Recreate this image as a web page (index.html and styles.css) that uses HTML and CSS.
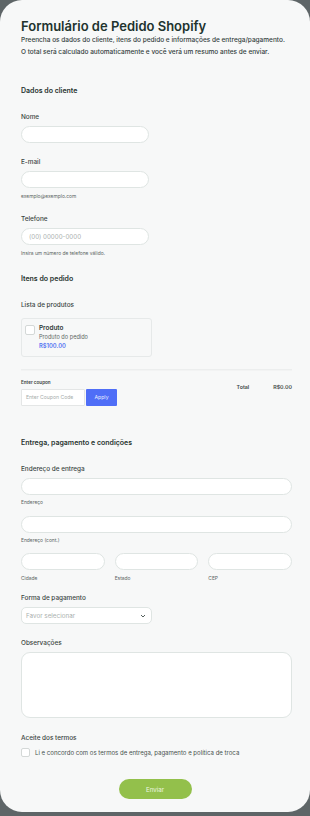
FILE: index.html
```html
<!DOCTYPE html>
<html lang="pt-BR">
<head>
    <meta charset="UTF-8">
    <meta name="viewport" content="width=device-width, initial-scale=1.0">
    <title>Formulário de Pedido Shopify</title>
    <link rel="stylesheet" href="styles.css">
</head>
<body>
    <div class="card">
        <h1 class="title">Formulário de Pedido Shopify</h1>
        <p class="subtitle">Preencha os dados do cliente, itens do pedido e informações de entrega/pagamento.<br>O total será calculado automaticamente e você verá um resumo antes de enviar.</p>

        <h2 class="section first">Dados do cliente</h2>

        <label class="label first">Nome</label>
        <div class="input short"></div>

        <label class="label wide">E-mail</label>
        <div class="input short"></div>
        <div class="help loose">exemplo@exemplo.com</div>

        <label class="label wide">Telefone</label>
        <div class="input short"><span class="placeholder">(00) 00000-0000</span></div>
        <div class="help loose">Insira um número de telefone válido.</div>

        <h2 class="section items">Itens do pedido</h2>
        <label class="label first">Lista de produtos</label>

        <div class="product">
            <span class="box"></span>
            <div class="product-info">
                <div class="product-name">Produto</div>
                <div class="product-desc">Produto do pedido</div>
                <div class="product-price">R$100.00</div>
            </div>
        </div>

        <div class="divider"></div>

        <div class="summary">
            <div class="coupon">
                <div class="coupon-label">Enter coupon</div>
                <div class="coupon-row">
                    <div class="coupon-input">Enter Coupon Code</div>
                    <div class="coupon-btn">Apply</div>
                </div>
            </div>
            <div class="total">
                <span>Total</span>
                <span class="total-value">R$0.00</span>
            </div>
        </div>

        <h2 class="section delivery">Entrega, pagamento e condições</h2>

        <label class="label first">Endereço de entrega</label>
        <div class="input"></div>
        <div class="help">Endereço</div>
        <div class="input gap"></div>
        <div class="help">Endereço (cont.)</div>

        <div class="triple">
            <div>
                <div class="input"></div>
                <div class="help">Cidade</div>
            </div>
            <div>
                <div class="input"></div>
                <div class="help">Estado</div>
            </div>
            <div>
                <div class="input"></div>
                <div class="help">CEP</div>
            </div>
        </div>

        <label class="label pay">Forma de pagamento</label>
        <div class="select">
            <span class="placeholder">Favor selecionar</span>
            <svg width="6" height="4" viewBox="0 0 6 4"><path d="M1 1l2 2 2-2" fill="none" stroke="#55605d" stroke-width="1"/></svg>
        </div>

        <label class="label notes">Observações</label>
        <div class="textarea"></div>

        <label class="label terms-title">Aceite dos termos</label>
        <div class="terms">
            <span class="box"></span>
            <span>Li e concordo com os termos de entrega, pagamento e política de troca</span>
        </div>

        <div class="actions">
            <button class="submit">Enviar</button>
        </div>
    </div>
</body>
</html>
```

FILE: styles.css
```css
body {
    margin: 0;
    background: #5e6567;
    font-family: Inter, "Noto Sans", sans-serif;
    color: #36423f;
}
.card {
    background: #f7f8f8;
    border-radius: 22px;
    height: 812px;
    padding: 18px 18px 0 21px;
    box-sizing: border-box;
}
.title {
    margin: 0;
    font-size: 13px;
    line-height: 16px;
    font-weight: 600;
    color: #21332e;
}
.subtitle {
    margin: 0;
    font-size: 6.5px;
    line-height: 12px;
    color: #34403d;
    font-weight: 500;
    white-space: nowrap;
}
.section {
    margin: 28px 0 0;
    font-size: 7px;
    line-height: 10px;
    font-weight: 600;
    color: #27332f;
}
.section.items {
    margin-top: 17px;
}
.section.delivery {
    margin-top: 32px;
}
.label {
    display: block;
    margin: 13px 0 4px;
    font-size: 6.4px;
    line-height: 10px;
    font-weight: 500;
    color: #3a4542;
}
.label.first {
    margin-top: 16px;
}
.label.wide {
    margin-top: 14px;
}
.label.pay {
    margin-top: 11px;
}
.label.notes {
    margin-top: 14px;
}
.label.terms-title {
    margin-top: 15px;
}
.input {
    height: 15px;
    background: #fff;
    border: 1px solid #dfe5e3;
    border-radius: 9px;
    display: flex;
    align-items: center;
    padding: 0 7px;
}
.input.short {
    width: 112px;
}
.input.gap {
    margin-top: 10px;
}
.placeholder {
    font-size: 6.2px;
    color: #aab0ae;
}
.help {
    margin-top: 3px;
    font-size: 4.9px;
    line-height: 8px;
    color: #5a6462;
}
.help.loose {
    margin-top: 4px;
}
.product {
    margin-top: 8px;
    width: 122px;
    border: 1px solid #e6e9e9;
    border-radius: 3px;
    display: flex;
    gap: 4px;
    padding: 5px 4px 6px 3px;
    height: 26px;
}
.box {
    width: 8px;
    height: 8px;
    flex: none;
    background: #fff;
    border: 1px solid #d4d8d7;
    border-radius: 2px;
}
.product .box {
    margin-top: 1px;
}
.product-name {
    font-size: 6.4px;
    line-height: 9px;
    font-weight: 600;
    color: #2f3a37;
}
.product-desc {
    font-size: 5.6px;
    line-height: 8px;
    color: #5c6663;
}
.product-price {
    font-size: 5.8px;
    line-height: 10px;
    font-weight: 600;
    color: #5272f2;
}
.divider {
    margin-top: 12px;
    height: 1px;
    background: #eceeee;
    border-bottom: 1px solid #f2f3f3;
}
.summary {
    display: flex;
    justify-content: space-between;
    margin-top: 8px;
}
.coupon-label {
    font-size: 4.6px;
    line-height: 8px;
    font-weight: 600;
    color: #3a4441;
}
.coupon-row {
    display: flex;
    gap: 1px;
    margin-top: 2px;
}
.coupon-input {
    width: 58px;
    height: 15px;
    background: #fff;
    border: 1px solid #e4e6e6;
    border-radius: 1px;
    font-size: 5.1px;
    line-height: 15px;
    color: #a7adab;
    padding-left: 4px;
}
.coupon-btn {
    width: 31px;
    height: 17px;
    background: #4f6ef7;
    border-radius: 1px;
    font-size: 5.2px;
    line-height: 17px;
    color: #e8ecff;
    text-align: center;
}
.total {
    display: flex;
    gap: 24px;
    margin-top: 4px;
    font-size: 5.3px;
    line-height: 8px;
    font-weight: 600;
    color: #3d4744;
}
.total-value {
    color: #434b49;
}
.triple {
    display: grid;
    grid-template-columns: 1fr 1fr 1fr;
    gap: 10px;
    margin-top: 9px;
}
.triple .help {
    margin-top: 4px;
}
.select {
    width: 120px;
    height: 15px;
    background: #fff;
    border: 1px solid #dfe5e3;
    border-radius: 5px;
    display: flex;
    align-items: center;
    justify-content: space-between;
    padding: 0 5px 0 4px;
}
.select .placeholder {
    font-size: 6.3px;
}
.textarea {
    height: 64px;
    background: #fff;
    border: 1px solid #dfe5e3;
    border-radius: 9px;
}
.terms {
    display: flex;
    align-items: center;
    gap: 5px;
    margin-top: 5px;
    font-size: 6.05px;
    color: #48524f;
}
.terms .box {
    width: 7px;
    height: 7px;
}
.actions {
    display: flex;
    justify-content: center;
    margin-top: 22px;
    padding-right: 3px;
}
.submit {
    width: 73px;
    height: 20px;
    border: none;
    border-radius: 10px;
    background: #93c04b;
    color: #eef6e2;
    font-family: inherit;
    font-size: 6.2px;
}
```
